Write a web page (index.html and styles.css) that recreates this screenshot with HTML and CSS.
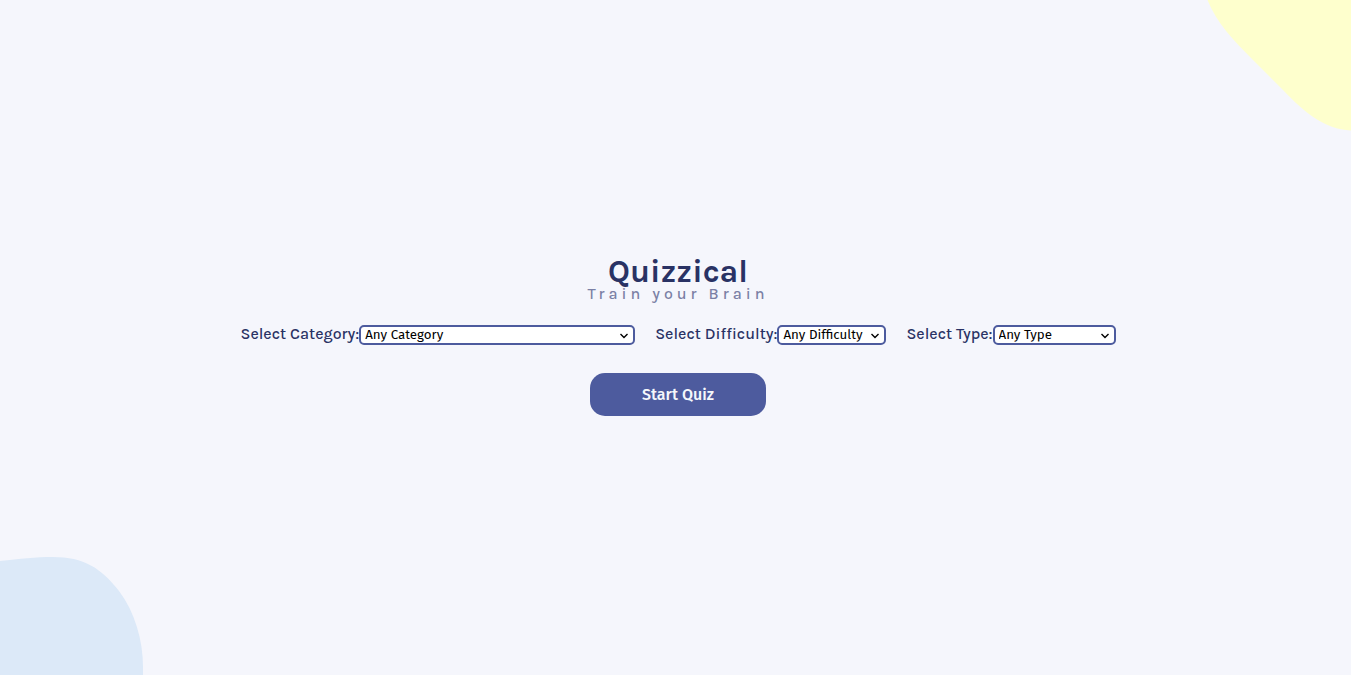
FILE: index.html
```html
<!DOCTYPE html>
<html lang="en">
<head>
<meta charset="utf-8">
<meta name="viewport" content="width=device-width, initial-scale=1">
<title>Quizzical</title>
<link rel="stylesheet" href="styles.css">
</head>
<body>
<svg class="blob blob-top" viewBox="0 0 144 131" aria-hidden="true"><path d="M0.500 0C9 22 27 41 46 60L76 90C98 113 117 129 144 130.500V0Z"/></svg>
<svg class="blob blob-bottom" viewBox="0 0 143 118" aria-hidden="true"><path d="M0 4C20 2 35 0 53 0C84 0 101 11 119 34C135 55 143 84 143 110V118H0Z"/></svg>
<main class="intro">
  <h1 class="title">Quizzical</h1>
  <p class="tagline">Train your Brain</p>
  <form class="quiz-form">
    <div class="options">
      <div class="option">
        <label for="category">Select Category:</label>
        <span class="picker picker-category"><select id="category"><option>Any Category</option></select><svg class="chevron" viewBox="0 0 10 6" aria-hidden="true"><path d="M1.5 1L5 4.500L8.500 1"/></svg></span>
      </div>
      <div class="option">
        <label for="difficulty">Select Difficulty:</label>
        <span class="picker picker-difficulty"><select id="difficulty"><option>Any Difficulty</option></select><svg class="chevron" viewBox="0 0 10 6" aria-hidden="true"><path d="M1.5 1L5 4.500L8.500 1"/></svg></span>
      </div>
      <div class="option">
        <label for="type">Select Type:</label>
        <span class="picker picker-type"><select id="type"><option>Any Type</option></select><svg class="chevron" viewBox="0 0 10 6" aria-hidden="true"><path d="M1.5 1L5 4.500L8.500 1"/></svg></span>
      </div>
    </div>
    <button class="start" type="button">Start Quiz</button>
  </form>
</main>
</body>
</html>
```
FILE: styles.css
```css
* {
  box-sizing: border-box;
}

body {
  margin: 0;
  min-height: 100vh;
  display: flex;
  align-items: center;
  justify-content: center;
  background: #f5f6fc;
  color: #293264;
  font-family: Karla, Inter, sans-serif;
  overflow: hidden;
}

.blob {
  position: absolute;
}

.blob-top {
  top: 0;
  right: 0;
  width: 144px;
  fill: #feffcd;
}

.blob-bottom {
  bottom: 0;
  left: 0;
  width: 143px;
  fill: #dce9f8;
}

.intro {
  display: flex;
  flex-direction: column;
  align-items: center;
  padding-left: 5px;
}

.title {
  margin: 0;
  font-size: 32px;
  line-height: 25px;
  font-weight: 700;
}

.tagline {
  margin: 0 0 21px;
  font-size: 16px;
  line-height: 20px;
  font-weight: 500;
  letter-spacing: 4px;
  color: #7b80a5;
}

.quiz-form {
  display: flex;
  flex-direction: column;
  align-items: center;
  gap: 28px;
}

.options {
  display: flex;
  gap: 20px;
}

.option {
  display: flex;
  align-items: flex-start;
  font-size: 16px;
  line-height: 18px;
  font-weight: 500;
}

.picker {
  position: relative;
}

.picker select {
  display: block;
  width: 100%;
  height: 20px;
  padding: 0 4px;
  appearance: none;
  border: 2px solid #4d5b9e;
  border-radius: 5px;
  background: #fff;
  color: #000;
  font-family: "Fira Sans", "Noto Sans", sans-serif;
}

.picker-category {
  width: 276px;
}

.picker-difficulty {
  width: 109px;
}

.picker-type {
  width: 123px;
}

.chevron {
  position: absolute;
  right: 6px;
  top: 8px;
  width: 10px;
  height: 6px;
  fill: none;
  stroke: #000;
  stroke-width: 1.4;
  pointer-events: none;
}

.start {
  width: 176px;
  height: 43px;
  border: 0;
  border-radius: 15px;
  background: #4d5b9e;
  color: #f5f7fb;
  font-family: "Fira Sans", "Noto Sans", sans-serif;
  font-size: 16px;
  font-weight: 500;
}
```
